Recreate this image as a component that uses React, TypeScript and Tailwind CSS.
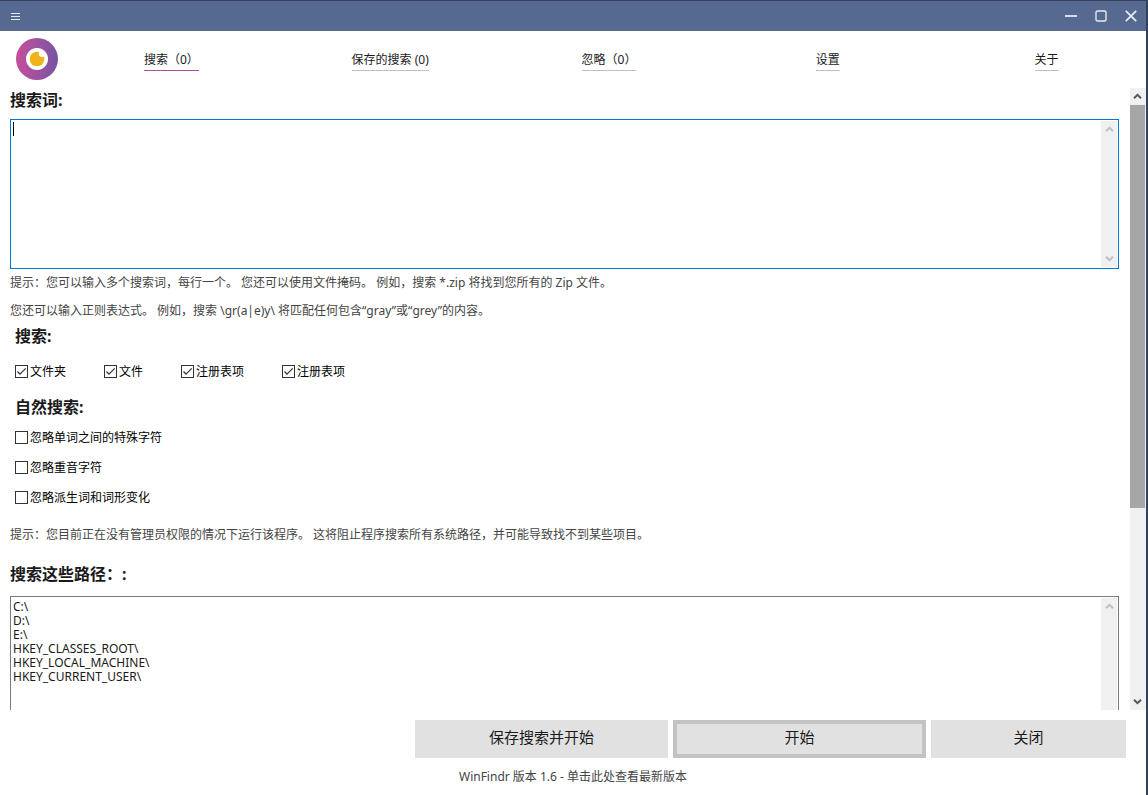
import { useState } from "react";
import clsx from "clsx";

const tabs = ["搜索（0）", "保存的搜索 (0)", "忽略（0）", "设置", "关于"];

const targets = [
  { id: "folders", label: "文件夹" },
  { id: "files", label: "文件" },
  { id: "registry-keys", label: "注册表项" },
  { id: "registry-values", label: "注册表项" },
];

const naturalOptions = [
  { id: "special-chars", label: "忽略单词之间的特殊字符" },
  { id: "accents", label: "忽略重音字符" },
  { id: "derived", label: "忽略派生词和词形变化" },
];

const defaultPaths = [
  "C:\\",
  "D:\\",
  "E:\\",
  "HKEY_CLASSES_ROOT\\",
  "HKEY_LOCAL_MACHINE\\",
  "HKEY_CURRENT_USER\\",
].join("\n");

function Logo() {
  return (
    <svg width="42" height="42" viewBox="0 0 42 42" aria-hidden="true">
      <defs>
        <linearGradient id="ring" x1="0" y1="0" x2="1" y2="0">
          <stop offset="0" stopColor="#c64f9b" />
          <stop offset="1" stopColor="#7654a3" />
        </linearGradient>
      </defs>
      <circle cx="21" cy="21" r="21" fill="url(#ring)" />
      <circle cx="21" cy="21" r="11" fill="#fff" />
      <circle cx="21" cy="21" r="7.3" fill="#f2b31a" />
      <circle cx="26" cy="15.8" r="3.2" fill="#fff" />
    </svg>
  );
}

function Arrow({ down }: { down?: boolean }) {
  return (
    <svg width="9" height="7" viewBox="0 0 9 7" className={clsx(down && "rotate-180")} aria-hidden="true">
      <path d="M1 5.2 4.5 1.8 8 5.2" fill="none" stroke="currentColor" strokeWidth="2" />
    </svg>
  );
}

function Checkbox({ id, label, defaultChecked }: { id: string; label: string; defaultChecked?: boolean }) {
  return (
    <label htmlFor={id} className="flex h-6 items-center gap-0.5 text-black">
      <span className="grid">
        <input
          id={id}
          type="checkbox"
          defaultChecked={defaultChecked}
          className="peer col-start-1 row-start-1 size-[13px] appearance-none border border-[#333] bg-white"
        />
        <svg
          viewBox="0 0 13 13"
          className="pointer-events-none col-start-1 row-start-1 hidden size-[13px] peer-checked:block"
          aria-hidden="true"
        >
          <path d="M2.5 6.5 5 9.2 10.7 3.3" fill="none" stroke="#333" strokeWidth="1.2" />
        </svg>
      </span>
      <span className="pt-0.5">{label}</span>
    </label>
  );
}

function TextBox({ id, value, focused }: { id: string; value?: string; focused?: boolean }) {
  return (
    <div
      className={clsx(
        "relative flex h-[150px] shrink-0 border bg-white p-px",
        focused ? "border-[#0078d7]" : "border-[#7a7a7a]"
      )}
    >
      {focused && <span className="absolute top-0.5 left-0.5 h-3.5 w-px bg-black" />}
      <textarea
        id={id}
        defaultValue={value}
        spellCheck={false}
        className="min-w-0 flex-1 resize-none overflow-hidden px-px pt-0.5 text-xs leading-[14px] text-[#1a1a1a] outline-none"
      />
      <div className="flex w-4 flex-col items-center justify-between bg-[#f0f0f0] py-[5px] text-[#bfbfbf]">
        <Arrow />
        <Arrow down />
      </div>
    </div>
  );
}

export default function App() {
  const [active, setActive] = useState(0);

  return (
    <div
      lang="zh-CN"
      className="flex h-screen flex-col overflow-hidden border-t border-r-2 border-t-[#36425b] border-r-[#33425c] bg-white font-['Noto_Sans','Noto_Sans_CJK_SC',sans-serif] text-xs text-[#1a1a1a]"
    >
      {/* Title bar */}
      <header className="flex h-[30px] shrink-0 items-center justify-between bg-[#566990] pr-[9px] pl-[11px] text-[#e6e9f0]">
        <button type="button" aria-label="菜单">
          <svg width="9" height="7" viewBox="0 0 9 7" className="block" aria-hidden="true">
            <path d="M0 .5h9M0 3.5h9M0 6.5h9" stroke="currentColor" />
          </svg>
        </button>
        <div className="flex items-center gap-[18px]">
          <button type="button" aria-label="最小化">
            <svg width="12" height="12" viewBox="0 0 12 12" className="block" aria-hidden="true">
              <path d="M0 6h12" stroke="currentColor" strokeWidth="1.8" />
            </svg>
          </button>
          <button type="button" aria-label="最大化">
            <svg width="12" height="12" viewBox="0 0 12 12" className="block" aria-hidden="true">
              <rect x="1" y="1" width="10" height="10" rx="1.5" fill="none" stroke="currentColor" strokeWidth="1.4" />
            </svg>
          </button>
          <button type="button" aria-label="关闭窗口">
            <svg width="12" height="12" viewBox="0 0 12 12" className="block" aria-hidden="true">
              <path d="M.8.8l10.4 10.4M11.2.8.8 11.2" stroke="currentColor" strokeWidth="1.8" />
            </svg>
          </button>
        </div>
      </header>

      {/* Tabs */}
      <div className="mb-0.5 flex h-[55px] shrink-0 items-center pl-4">
        <Logo />
        <nav className="-mr-2.5 ml-1 grid flex-1 grid-cols-5 justify-items-center">
          {tabs.map((tab, i) => (
            <a
              key={tab}
              href="#"
              onClick={() => setActive(i)}
              className={clsx(
                "border-b pt-[3px] leading-5 whitespace-nowrap",
                i === active ? "border-b-[#a84e9e]" : "border-b-[#c0c0c0]"
              )}
            >
              {tab}
            </a>
          ))}
        </nav>
      </div>

      <div className="flex min-h-0 flex-1">
        <main className="flex min-w-0 flex-1 flex-col overflow-hidden pr-[11px] pl-2.5">
          <label htmlFor="terms" className="mb-[7px] text-base leading-6 font-bold">
            搜索词:
          </label>
          <TextBox id="terms" focused />
          <div className="mt-0.5 flex flex-col gap-1 leading-6 text-[#444]">
            <p>提示：您可以输入多个搜索词，每行一个。 您还可以使用文件掩码。 例如，搜索 *.zip 将找到您所有的 Zip 文件。</p>
            <p>您还可以输入正则表达式。 例如，搜索 \gr(a|e)y\ 将匹配任何包含“gray”或“grey”的内容。</p>
          </div>

          <section className="pl-[5px]">
            <h2 className="mt-px text-base leading-6 font-bold">搜索:</h2>
            <div className="mt-[11px] flex gap-[38px]">
              {targets.map((item) => (
                <Checkbox key={item.id} id={item.id} label={item.label} defaultChecked />
              ))}
            </div>
            <h2 className="mt-3 text-base leading-6 font-bold">自然搜索:</h2>
            <div className="mt-1.5 flex flex-col items-start gap-1.5">
              {naturalOptions.map((item) => (
                <Checkbox key={item.id} id={item.id} label={item.label} />
              ))}
            </div>
          </section>

          <p className="mt-3.5 leading-6 text-[#444]">
            提示：您目前正在没有管理员权限的情况下运行该程序。 这将阻止程序搜索所有系统路径，并可能导致找不到某些项目。
          </p>
          <label htmlFor="paths" className="mt-[15px] mb-2.5 text-base leading-6 font-bold">
            搜索这些路径：:
          </label>
          <TextBox id="paths" value={defaultPaths} />
        </main>

        {/* Page scrollbar */}
        <div className="flex w-4 flex-col items-center bg-[#f0f0f0] pr-px text-[#555]">
          <div className="flex h-[17px] items-center">
            <Arrow />
          </div>
          <div className="w-full flex-1">
            <div className="h-[68.5%] bg-[#a6a6a6]" />
          </div>
          <div className="flex h-[17px] items-center">
            <Arrow down />
          </div>
        </div>
      </div>

      {/* Actions */}
      <footer className="flex h-[85px] shrink-0 flex-col pt-2.5">
        <div className="flex justify-end gap-[5px] pr-5 text-[15px]">
          <button type="button" className="h-[38px] w-[253px] bg-[#e1e1e1] pb-1">
            保存搜索并开始
          </button>
          <button type="button" className="h-[38px] w-[253px] border-4 border-[#c3c3c3] bg-[#e1e1e1] pb-1">
            开始
          </button>
          <button type="button" className="h-[38px] w-[195px] bg-[#e1e1e1] pb-1">
            关闭
          </button>
        </div>
        <a href="#" className="mt-[7px] self-center leading-6 text-[#444]">
          WinFindr 版本 1.6 - 单击此处查看最新版本
        </a>
      </footer>
    </div>
  );
}
